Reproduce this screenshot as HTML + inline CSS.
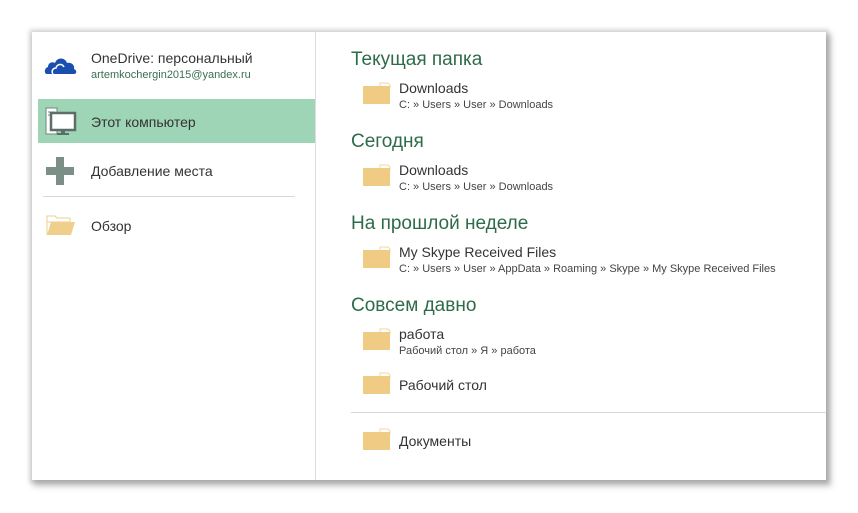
<!DOCTYPE html>
<html><head><meta charset="utf-8"><style>
*{margin:0;padding:0;box-sizing:border-box}
body{width:858px;height:513px;background:#fff;position:relative;overflow:hidden;font-family:"Segoe UI","Liberation Sans","DejaVu Sans",sans-serif}
.panel{position:absolute;left:32px;top:32px;width:794px;height:448px;background:#fff;box-shadow:0 0 4px 3px rgba(0,0,0,.12),3px 4px 6px 2px rgba(0,0,0,.25)}
.abs{position:absolute;white-space:nowrap}
.t{color:#333;font-size:14px}
.p{color:#444;font-size:11px}
.h{color:#2e6b49;font-size:19px}
.vl{position:absolute;left:315px;top:32px;width:1px;height:448px;background:#dcdcdc}
.fold{position:absolute;width:28px;height:22px}
</style></head><body>
<div class="panel"></div>
<div class="vl"></div>
<svg class="abs" style="left:44px;top:54px" width="34" height="22" viewBox="0 0 34 22"><path d="M3 20 C0 20 0 14 4 13 C4 9 8 7 11 9 C13 3 21 3 23 9 C27 8 31 11 30 15 C33 16 33 20 30 20 Z" fill="#1a4fb0"/><path d="M9 20 C7 17 9 14 12 14 C13 10 18 9 20 13" fill="none" stroke="#fff" stroke-width="1.5"/></svg>
<div class="abs t" style="left:91px;top:50px">OneDrive: персональный</div>
<div class="abs" style="left:91px;top:69px;font-size:11px;color:#3b6e52">artemkochergin2015@yandex.ru</div>
<div class="abs" style="left:38px;top:99px;width:277px;height:44px;background:#9fd5b7"></div>
<svg class="abs" style="left:45px;top:107px" width="32" height="30" viewBox="0 0 32 30"><rect x="1" y="1" width="11" height="26" fill="#fff" stroke="#6d8a7c"/><line x1="3" y1="5" x2="10" y2="5" stroke="#6d8a7c"/><line x1="3" y1="8" x2="10" y2="8" stroke="#6d8a7c"/><rect x="6" y="6" width="24" height="17" fill="#fff" stroke="#5d6e66" stroke-width="2.5"/><rect x="16" y="23" width="4" height="4" fill="#5d6e66"/><rect x="12" y="26" width="12" height="2" fill="#5d6e66"/></svg>
<div class="abs t" style="left:91px;top:114px">Этот компьютер</div>
<svg class="abs" style="left:46px;top:157px" width="28" height="28"><rect x="10" y="0" width="8" height="28" fill="#7b8f86"/><rect x="0" y="10" width="28" height="8" fill="#7b8f86"/></svg>
<div class="abs t" style="left:91px;top:163px">Добавление места</div>
<div class="abs" style="left:43px;top:196px;width:252px;height:1px;background:#d8d8d8"></div>
<svg class="abs" style="left:46px;top:214px" width="30" height="22"><path d="M1 2 H9 L11 4 H24 V8 H1 Z" fill="#fff" stroke="#f0cf8c"/><path d="M1 21 L5 8 H29 L25 21 Z" fill="#f0cf8c"/><path d="M1 3 V21" stroke="#f0cf8c"/></svg>
<div class="abs t" style="left:91px;top:218px">Обзор</div>
<div class="abs h" style="left:351px;top:49px">Текущая папка</div>
<div class="abs t" style="left:399px;top:80px">Downloads</div>
<div class="abs p" style="left:399px;top:99px">C: » Users » User » Downloads</div>
<div class="abs h" style="left:351px;top:131px">Сегодня</div>
<div class="abs t" style="left:399px;top:162px">Downloads</div>
<div class="abs p" style="left:399px;top:181px">C: » Users » User » Downloads</div>
<div class="abs h" style="left:351px;top:213px">На прошлой неделе</div>
<div class="abs t" style="left:399px;top:244px">My Skype Received Files</div>
<div class="abs p" style="left:399px;top:263px">C: » Users » User » AppData » Roaming » Skype » My Skype Received Files</div>
<div class="abs h" style="left:351px;top:295px">Совсем давно</div>
<div class="abs t" style="left:399px;top:326px">работа</div>
<div class="abs p" style="left:399px;top:345px">Рабочий стол » Я » работа</div>
<div class="abs t" style="left:399px;top:377px">Рабочий стол</div>
<div class="abs" style="left:351px;top:412px;width:475px;height:1px;background:#d8d8d8"></div>
<div class="abs t" style="left:399px;top:433px">Документы</div>
<svg width="0" height="0" style="position:absolute"><defs><g id="f"><path d="M17 1 H25 L27 3 V6 H17 Z" fill="#fff" stroke="#f0d7a2"/><rect x="0" y="4" width="27" height="20" fill="#f0cb84"/></g></defs></svg>
<svg class="fold" style="left:363px;top:82px" width="28" height="25"><use href="#f"/></svg>
<svg class="fold" style="left:363px;top:164px" width="28" height="25"><use href="#f"/></svg>
<svg class="fold" style="left:363px;top:246px" width="28" height="25"><use href="#f"/></svg>
<svg class="fold" style="left:363px;top:328px" width="28" height="25"><use href="#f"/></svg>
<svg class="fold" style="left:363px;top:372px" width="28" height="25"><use href="#f"/></svg>
<svg class="fold" style="left:363px;top:428px" width="28" height="25"><use href="#f"/></svg>
</body></html>
